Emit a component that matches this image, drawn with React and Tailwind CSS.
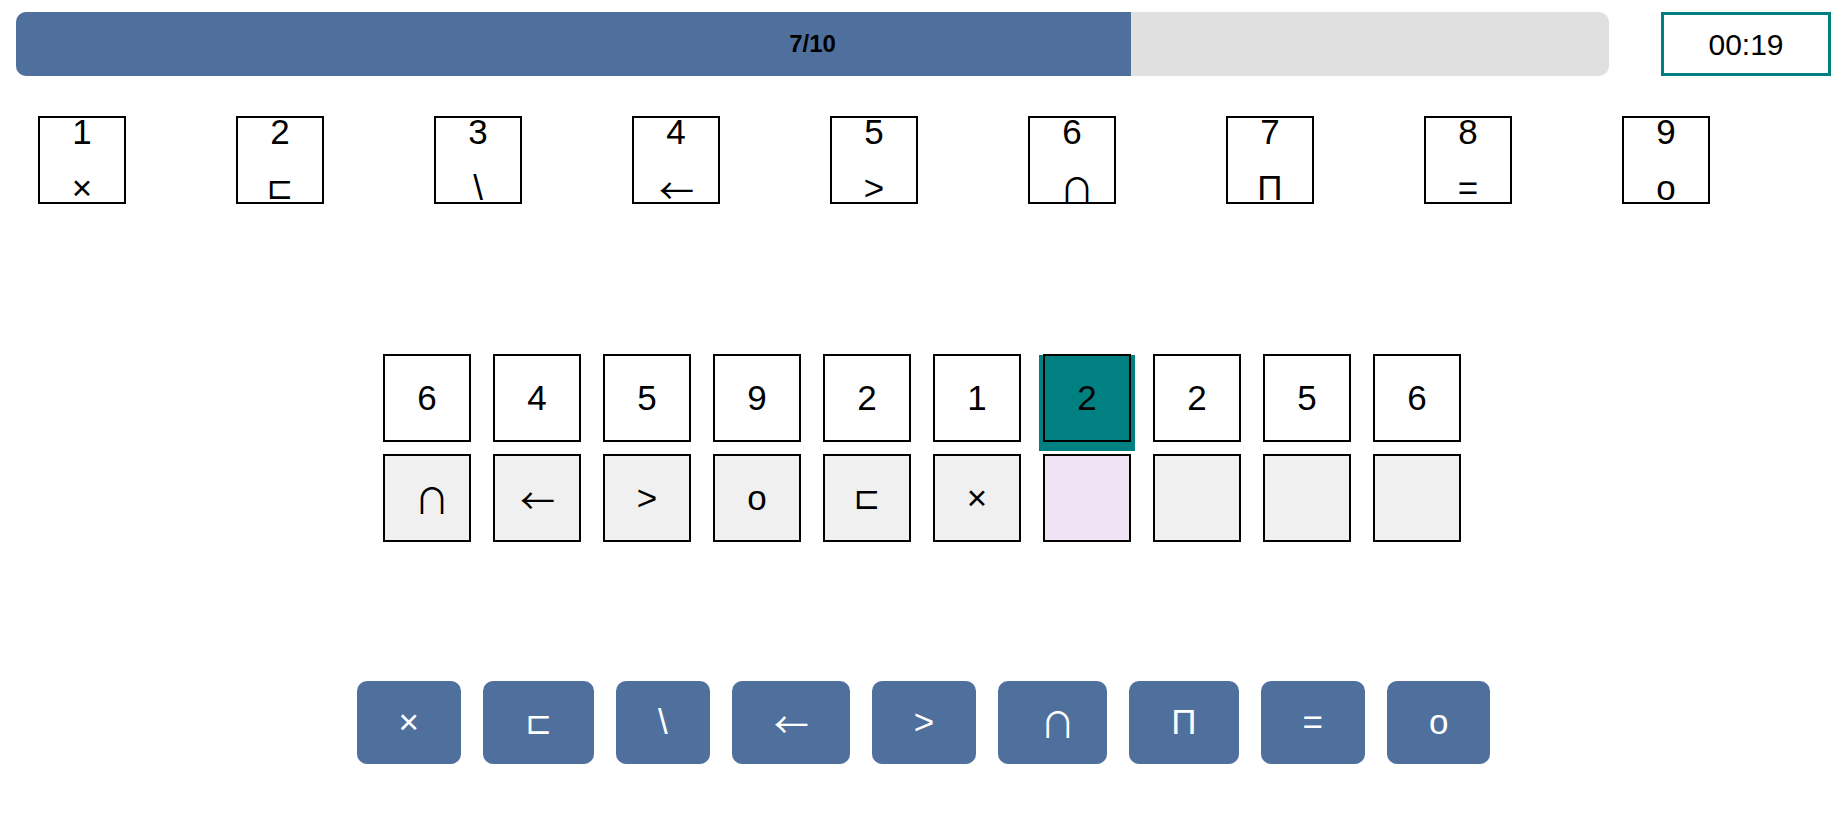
import React from 'react';

const KEYS = [
    { n: 1, s: '×' },
    { n: 2, s: '⊏' },
    { n: 3, s: '\\' },
    { n: 4, s: '←' },
    { n: 5, s: '>' },
    { n: 6, s: '∩' },
    { n: 7, s: 'Π' },
    { n: 8, s: '=' },
    { n: 9, s: 'o' },
];

const SEQUENCE = [6, 4, 5, 9, 2, 1, 2, 2, 5, 6];
const ANSWERS = ['∩', '←', '>', 'o', '⊏', '×'];
const CURRENT = 6;

// a few glyphs need another font to look like the original
const Sym = ({ s }) => {
    if (s === '∩') return <span className="inline-block w-[25px] text-center font-['Noto_Sans_CJK_JP',sans-serif] leading-none">{s}</span>;
    if (s === '←') return <span className="inline-block w-[34px] text-center font-['Noto_Sans_CJK_JP',sans-serif] leading-none">{s}</span>;
    if (s === '⊏') return <span className="inline-block w-[27px] text-center font-['DejaVu_Sans',sans-serif] text-[32px] leading-none">{s}</span>;
    return <span>{s}</span>;
};

const App = () => {
    return (
        <div className="min-h-screen bg-white text-black font-['Liberation_Sans','Arial','DejaVu_Sans',sans-serif]">
            {/* progress + timer */}
            <div className="flex items-center gap-[52px] px-4 pt-3">
                <div className="relative h-16 flex-1 overflow-hidden rounded-[10px] bg-[#e0e0e0]">
                    <div className="h-full bg-[#4f709c]" style={{ width: `${(7 / 10) * 100}%` }}></div>
                    <span className="absolute inset-0 flex items-center justify-center text-[24px] font-bold">7/10</span>
                </div>
                <div className="flex h-16 w-[170px] items-center justify-center border-[3px] border-[#008080] text-[30px]">
                    00:19
                </div>
            </div>

            {/* key */}
            <div className="mt-10 flex gap-[110px] pl-[38px]">
                {KEYS.map((k) => (
                    <div key={k.n} className="flex h-[88px] w-[88px] flex-col items-center border-2 border-black text-[35px]">
                        <span className="flex h-[28px] items-center leading-[28px]">{k.n}</span>
                        <span className="mt-[28px] flex h-[28px] items-center justify-center leading-[28px]">
                            <Sym s={k.s} />
                        </span>
                    </div>
                ))}
            </div>

            {/* sequence */}
            <div className="mt-[150px] flex flex-col items-center gap-3 pr-[3px]">
                <div className="flex gap-[22px]">
                    {SEQUENCE.map((n, i) => (
                        <div
                            key={i}
                            className={
                                i === CURRENT
                                    ? 'flex h-[88px] w-[88px] items-center justify-center border-2 border-black bg-[#008080] text-[35px] shadow-[0_5px_0_4px_#008080]'
                                    : 'flex h-[88px] w-[88px] items-center justify-center border-2 border-black bg-white text-[35px]'
                            }
                        >
                            {n}
                        </div>
                    ))}
                </div>
                <div className="flex gap-[22px]">
                    {SEQUENCE.map((n, i) => (
                        <div
                            key={i}
                            className={
                                i === CURRENT
                                    ? 'flex h-[88px] w-[88px] items-center justify-center border-2 border-black bg-[#f0e4f4] text-[35px]'
                                    : 'flex h-[88px] w-[88px] items-center justify-center border-2 border-black bg-[#f0f0f0] text-[35px]'
                            }
                        >
                            {ANSWERS[i] ? <Sym s={ANSWERS[i]} /> : null}
                        </div>
                    ))}
                </div>
            </div>

            {/* symbol buttons */}
            <div className="mt-[139px] flex justify-center gap-[22px]">
                {KEYS.map((k) => (
                    <button
                        key={k.n}
                        className="flex h-[83px] items-center justify-center rounded-[10px] bg-[#4f709c] px-[42px] text-[35px] text-white"
                    >
                        <Sym s={k.s} />
                    </button>
                ))}
            </div>
        </div>
    );
};

export default App;
